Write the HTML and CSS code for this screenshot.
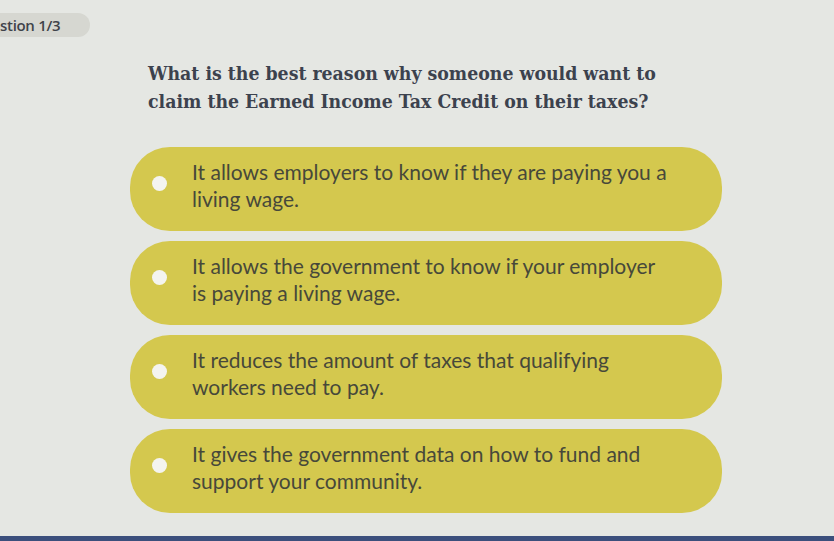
FILE: index.html
```html
<!DOCTYPE html>
<html>
<head>
<meta charset="utf-8">
<link rel="stylesheet" href="styles.css">
</head>
<body>
<div class="page">
  <div class="tag">stion 1/3</div>
  <h1 class="question">What is the best reason why someone would want to<br>claim the Earned Income Tax Credit on their taxes?</h1>
  <div class="options">
    <div class="option"><span class="radio"></span><p class="text">It allows employers to know if they are paying you a<br>living wage.</p></div>
    <div class="option"><span class="radio"></span><p class="text">It allows the government to know if your employer<br>is paying a living wage.</p></div>
    <div class="option"><span class="radio"></span><p class="text">It reduces the amount of taxes that qualifying<br>workers need to pay.</p></div>
    <div class="option"><span class="radio"></span><p class="text">It gives the government data on how to fund and<br>support your community.</p></div>
  </div>
  <div class="spacer"></div>
  <div class="bottombar"></div>
</div>
</body>
</html>
```
FILE: styles.css
```css
html, body {
  margin: 0;
  padding: 0;
}
body {
  width: 834px;
  height: 541px;
  overflow: hidden;
  background: #e5e7e3;
}
.page {
  height: 541px;
  display: flex;
  flex-direction: column;
}
.tag {
  margin-top: 13px;
  width: 90px;
  height: 24px;
  background: #d6d7d1;
  border-radius: 0 12px 12px 0;
  font-family: "Open Sans", sans-serif;
  font-weight: 600;
  font-size: 15px;
  line-height: 24px;
  color: #3f434a;
  letter-spacing: -0.3px;
}
.question {
  margin: 23px 0 0 148px;
  font-family: "DejaVu Serif", serif;
  font-stretch: condensed;
  font-weight: bold;
  font-size: 19.3px;
  line-height: 28px;
  color: #3c424e;
}
.options {
  margin: 31px 0 0 130px;
  width: 592px;
  display: flex;
  flex-direction: column;
  gap: 10px;
}
.option {
  height: 84px;
  background: #d4c84e;
  border-radius: 40px;
  display: flex;
  align-items: center;
}
.radio {
  flex: none;
  width: 15px;
  height: 15px;
  border-radius: 50%;
  background: #f4f4ef;
  margin-left: 22px;
  margin-right: 25px;
  margin-top: -11px;
}
.text {
  margin: -9px 0 0 0;
  font-family: "Lato", sans-serif;
  font-size: 21px;
  line-height: 27px;
  color: #47483a;
}
.spacer {
  flex: 1;
}
.bottombar {
  height: 5px;
  background: #3b4f7c;
}
```
